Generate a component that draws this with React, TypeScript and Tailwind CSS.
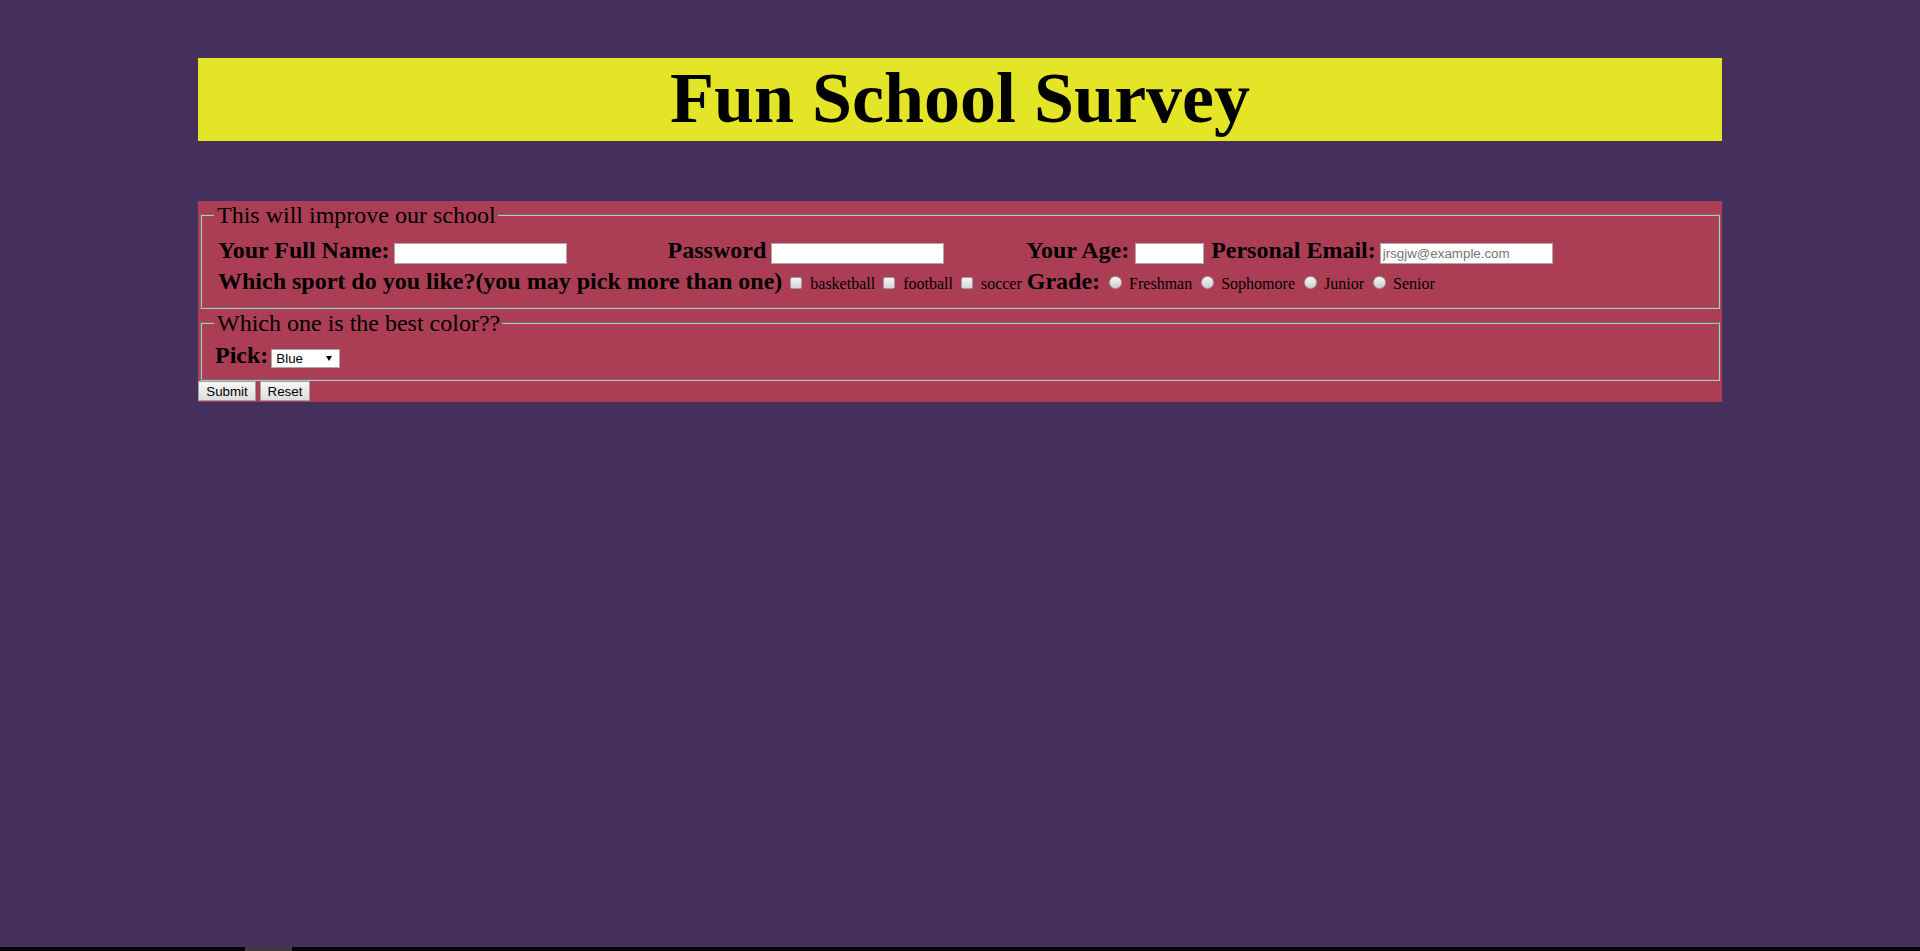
import React from "react";

const serif = "font-['Liberation_Serif','Times_New_Roman',serif]";
const sans = "font-['Liberation_Sans',Arial,sans-serif]";

const textInput =
  "inline-block align-baseline h-[21px] border border-[#a9a9a9] bg-white px-[2px] text-[13.33px] leading-[normal] font-normal text-black outline-none placeholder:text-[#757575] font-['Liberation_Sans',Arial,sans-serif]";

const checkbox =
  "appearance-none inline-block align-baseline w-[12px] h-[12px] ml-[8px] border border-[#9b9b9b] rounded-[2px] bg-linear-to-b from-[#f5f5f5] to-[#d6d6d6]";

const radio =
  "appearance-none inline-block align-baseline w-[13px] h-[13px] ml-[9px] rounded-full border border-[#a3a3a3] bg-linear-to-b from-[#f7f7f7] to-[#cdcdcd]";

function Sport({ name }: { name: string }) {
  return (
    <>
      <input type="checkbox" name="sport" value={name} className={checkbox} />
      <span className="ml-[8px] text-[16px] font-normal">{name}</span>
    </>
  );
}

function Grade({ name }: { name: string }) {
  return (
    <>
      <input type="radio" name="grade" value={name} className={radio} />
      <span className="ml-[7px] text-[16px] font-normal">{name}</span>
    </>
  );
}

export default function App() {
  return (
    <div className={`min-h-screen bg-[#452f5d] pt-[58px] text-black ${serif}`}>
      {/* Title */}
      <h1 className="mx-auto w-[1524px] h-[83px] bg-[#e3e526] text-center text-[72px] font-bold leading-[81px]">
        Fun School Survey
      </h1>

      {/* Survey form */}
      <form className="mx-auto mt-[60px] w-[1524px] bg-[#ab3e55] pb-[1px]">
        <fieldset className="mx-[2px] border-2 [border-style:groove] border-[#c0c0c0] px-[12px] pt-[7px] pb-[12px]">
          <legend className="pl-[3px] pr-[2px] text-[24px] leading-[28px]">This will improve our school</legend>

          <div className="h-[31px] whitespace-nowrap text-[24px] font-bold leading-[28px]">
            <span className="ml-[4px]">Your Full Name:</span>
            <input type="text" className={`${textInput} ml-[4px] w-[173px]`} />
            <span className="ml-[101px]">Password</span>
            <input type="password" className={`${textInput} ml-[5px] w-[173px]`} />
            <span className="ml-[82px]">Your Age:</span>
            <input type="text" className={`${textInput} ml-[6px] w-[69px]`} />
            <span className="ml-[7px]">Personal Email:</span>
            <input
              type="email"
              placeholder="jrsgjw@example.com"
              className={`${textInput} ml-[4px] w-[173px]`}
            />
          </div>

          <div className="h-[28px] whitespace-nowrap text-[24px] font-bold leading-[28px]">
            <span className="ml-[4px]">Which sport do you like?(you may pick more than one)</span>
            <Sport name="basketball" />
            <Sport name="football" />
            <Sport name="soccer" />
            <span className="ml-[5px]">Grade:</span>
            <Grade name="Freshman" />
            <Grade name="Sophomore" />
            <Grade name="Junior" />
            <Grade name="Senior" />
          </div>
        </fieldset>

        <fieldset className="mx-[2px] border-2 [border-style:groove] border-[#c0c0c0] px-[12px] pt-[4px] pb-[10px]">
          <legend className="pl-[3px] pr-[2px] text-[24px] leading-[28px]">Which one is the best color??</legend>
          <div className="h-[28px] whitespace-nowrap text-[24px] font-bold leading-[28px]">
            <span className="ml-[1px]">Pick:</span>
            <span className="relative ml-[3px] inline-flex align-baseline">
              <select
                defaultValue="Blue"
                className={`appearance-none h-[19px] w-[69px] border border-[#a9a9a9] bg-white pl-[4px] text-[13.33px] leading-[normal] font-normal text-black outline-none ${sans}`}
              >
                <option>Blue</option>
                <option>Red</option>
                <option>Green</option>
                <option>Yellow</option>
              </select>
              <svg
                className="pointer-events-none absolute right-[8px] top-[7px]"
                width="6"
                height="5"
                viewBox="0 0 6 5"
              >
                <polygon points="0,0 6,0 3,5" fill="#000" />
              </svg>
            </span>
          </div>
        </fieldset>

        <div className="flex h-[20px] gap-[4px]">
          <button
            type="submit"
            className={`h-[20px] w-[58px] border border-[#a0a0a0] bg-linear-to-b from-[#f6f6f6] to-[#dddddd] text-[13.33px] leading-[normal] text-black ${sans}`}
          >
            Submit
          </button>
          <button
            type="reset"
            className={`h-[20px] w-[50px] border border-[#a0a0a0] bg-linear-to-b from-[#f6f6f6] to-[#dddddd] text-[13.33px] leading-[normal] text-black ${sans}`}
          >
            Reset
          </button>
        </div>
      </form>

      {/* bottom scroll strip */}
      <div className="fixed bottom-0 left-0 h-[4px] w-full bg-black">
        <div className="ml-[245px] h-full w-[47px] bg-[#3b3b3b]" />
      </div>
    </div>
  );
}
